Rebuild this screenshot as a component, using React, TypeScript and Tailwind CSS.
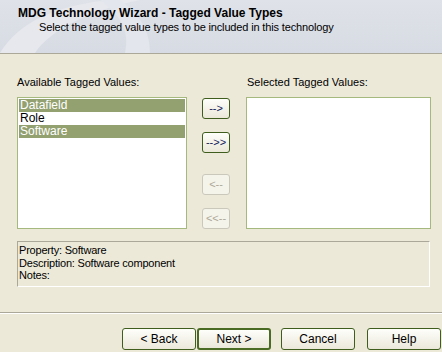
import React from "react";

const font = { fontFamily: '"Liberation Sans", Arial, sans-serif' };

function ArrowBtn({ label, disabled }: { label: string; disabled?: boolean }) {
  return (
    <div
      className={
        "w-[28px] h-[21px] rounded-[3px] border flex items-center justify-center text-[11px] leading-none " +
        (disabled
          ? "border-[#cac8bb] bg-[#f5f4ea] text-[#aca899]"
          : "border-[#3f5e1e] bg-gradient-to-b from-[#fefefb] to-[#ebe8d9] text-[#10205a]")
      }
    >
      {label}
    </div>
  );
}

function WizBtn({ label, def }: { label: string; def?: boolean }) {
  return (
    <div
      className={
        "w-[74px] h-[22px] rounded-[3px] flex items-center justify-center text-[12px] text-black bg-gradient-to-b from-[#fefefb] to-[#ebe8da] " +
        (def ? "border-[2px] border-[#4a6b23]" : "border border-[#3f5e1e]")
      }
    >
      {label}
    </div>
  );
}

export default function App() {
  return (
    <div className="w-[442px] h-[352px] bg-[#ece9d8] overflow-hidden flex flex-col" style={font}>
      <div className="relative h-[53px] bg-gradient-to-b from-[#dfe2e8] to-[#d7dbe3] overflow-hidden">
        <svg className="absolute left-0 top-0" width="442" height="53" viewBox="0 0 442 53">
          <path d="M0 53 C 20 20, 60 5, 110 0 L 140 0 C 90 10, 50 30, 35 53 Z" fill="#e6e8ee" />
          <path d="M150 53 C 150 30, 140 15, 120 0 L 100 0 C 120 15, 130 30, 125 53 Z" fill="#e3e6ec" />
        </svg>
        <div className="relative pl-[18px] pt-[6px]">
          <div className="text-[12px] font-bold text-black leading-[15px]">
            MDG Technology Wizard - Tagged Value Types
          </div>
          <div className="pl-[21px] text-[11px] text-black leading-[13px] tracking-[-0.15px]">
            Select the tagged value types to be included in this technology
          </div>
        </div>
      </div>
      <div className="h-px bg-[#aca899]" />
      <div className="pl-[17px] pt-[22px] flex">
        <div className="w-[170px] flex flex-col">
          <div className="text-[11px] leading-[13px] text-black h-[21px]">Available Tagged Values:</div>
          <div className="h-[132px] border border-[#a5b97f] bg-white p-px text-[12px] leading-[13px]">
            <div className="bg-[#93a070] text-white pl-[1px]">Datafield</div>
            <div className="text-black pl-[1px]">Role</div>
            <div className="bg-[#93a070] text-white pl-[1px]">Software</div>
          </div>
        </div>
        <div className="ml-[15px] pt-[22px] flex flex-col">
          <ArrowBtn label="-->" />
          <div className="h-[13px]" />
          <ArrowBtn label="-->>" />
          <div className="h-[21px]" />
          <ArrowBtn label="<--" disabled />
          <div className="h-[13px]" />
          <ArrowBtn label="<<--" disabled />
        </div>
        <div className="ml-[16px] w-[185px] flex flex-col">
          <div className="text-[11px] leading-[13px] text-black h-[21px] pl-px">Selected Tagged Values:</div>
          <div className="h-[132px] border border-[#a5b97f] bg-white" />
        </div>
      </div>
      <div className="ml-[17px] mt-[12px] w-[413px] h-[46px] border border-t-[#aca899] border-l-[#aca899] border-r-white border-b-white px-[1px] pt-[2px] text-[11px] leading-[12.5px] tracking-[-0.2px] text-black">
        <div>Property: Software</div>
        <div>Description: Software component</div>
        <div>Notes:</div>
      </div>
      <div className="mt-[25px] h-px bg-[#aca899]" />
      <div className="h-px bg-white" />
      <div className="mt-[14px] flex pl-[122px]">
        <WizBtn label="< Back" />
        <div className="w-px" />
        <WizBtn label="Next >" def />
        <div className="w-[10px]" />
        <WizBtn label="Cancel" />
        <div className="w-[12px]" />
        <WizBtn label="Help" />
      </div>
    </div>
  );
}
